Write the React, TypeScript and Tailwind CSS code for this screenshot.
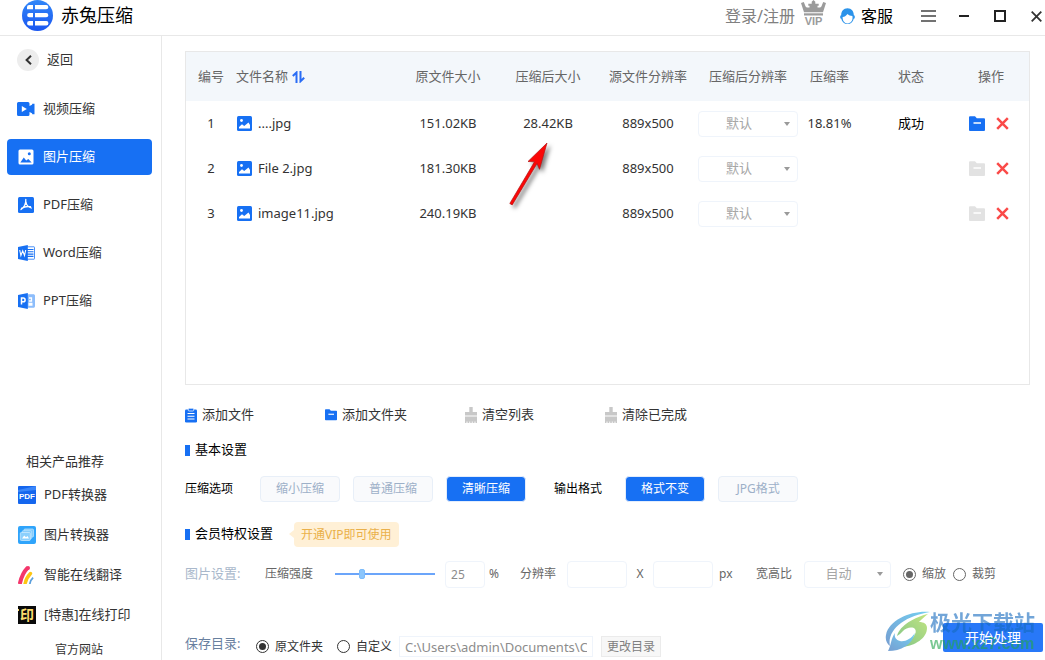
import type { ReactNode } from 'react';

const BLUE = '#1770f3';

function LogoIcon() {
  return (
    <svg width="31" height="31" viewBox="0 0 31 31" className="shrink-0" aria-hidden="true">
      <defs>
        <linearGradient id="logo" x1="0" y1="0" x2="0" y2="1">
          <stop offset="0" stopColor="#3187f8" />
          <stop offset="1" stopColor="#1a56f0" />
        </linearGradient>
      </defs>
      <circle cx="15.5" cy="15.5" r="15.5" fill="url(#logo)" />
      <g fill="#fff">
        <path d="M7.3 5H11v4.3H5V7.3A2.3 2.3 0 0 1 7.3 5zM13 5h11.200a2.150 2.150 0 0 1 0 4.300H13z" />
        <path d="M7.300 13H11v4.300H7.300a2.150 2.150 0 0 1 0-4.300zM13 13h11.200a2.150 2.150 0 0 1 0 4.300H13z" />
        <path d="M7.300 21H11v4.500H7.300a2.200 2.200 0 0 1 0-4.500zM13 21h11.200a2.200 2.200 0 0 1 0 4.500H13z" />
      </g>
    </svg>
  );
}

function VipIcon() {
  return (
    <svg width="25" height="26" viewBox="0 0 25 26" fill="#9b9b9b" aria-hidden="true">
      <path d="M0 3l2.800-1 1.400 3.600C4.700 7 5.300 7.600 6.800 7.600h1.700V5.800H7.300V3.700h3.400V1.800L12.500 0l1.800 1.800v1.900h3.400v2.100h-1.200v1.800h1.700c1.500 0 2.100-.6 2.600-2L22.200 2 25 3l-3 9.200H3z" />
      <path d="M3 13.300h19v2.200H3z" />
      <text x="12.500" y="25" textAnchor="middle" fontSize="11" fontWeight="700" fontFamily="Liberation Sans, sans-serif">VIP</text>
    </svg>
  );
}

function ServiceIcon() {
  return (
    <svg width="15" height="17" viewBox="0 0 15 17" aria-hidden="true">
      <circle cx="2" cy="9" r="2" fill="#3f9df0" />
      <circle cx="13" cy="9" r="2" fill="#3f9df0" />
      <path d="M7.500.3c4 0 6.300 3 6.300 7v2.500a6.300 6.300 0 0 1-12.600 0V7.300c0-4 2.300-7 6.300-7z" fill="#2b93ea" />
      <path d="M2.600 9C4.800 8.600 6.500 7.400 7.400 5.900c1.300 1.200 3 1.900 5 2.100.8 4.200-1.500 7.400-4.900 7.400-3.100 0-5-2.700-4.900-6.400z" fill="#fff" />
    </svg>
  );
}

function PictureIcon() {
  return (
    <svg width="15" height="15" viewBox="0 0 15 15" className="shrink-0" aria-hidden="true">
      <rect width="15" height="15" rx="1.500" fill={BLUE} />
      <circle cx="4.500" cy="4.500" r="1.400" fill="#fff" />
      <path d="M2 12.500V11l3-2.700 2.200 1.600L11.500 6.500 13 9v3.500z" fill="#fff" />
    </svg>
  );
}

function VideoIcon() {
  return (
    <svg width="18" height="14" viewBox="0 0 18 14" aria-hidden="true">
      <path d="M1.500 0H11a1.500 1.500 0 0 1 1.500 1.500V4l2.500-1.300.3-.9H17.500v10.400H15.300l-.3-.9L12.500 10v2.500A1.500 1.500 0 0 1 11 14H1.500A1.500 1.500 0 0 1 0 12.500v-11A1.500 1.500 0 0 1 1.500 0z" fill={BLUE} />
      <path d="M4.800 4l5 3-5 3z" fill="#fff" />
    </svg>
  );
}

function PhotoIcon() {
  return (
    <svg width="16" height="16" viewBox="0 0 16 16" aria-hidden="true">
      <rect x=".5" y=".5" width="15" height="15" rx="1.500" fill="#fff" />
      <circle cx="11.300" cy="4.800" r="1.500" fill={BLUE} />
      <path d="M2.300 13.500L5.800 8.500l2.400 3L10.300 10l3.400 3.500z" fill={BLUE} />
    </svg>
  );
}

function PdfIcon() {
  return (
    <svg width="16" height="16" viewBox="0 0 16 16" aria-hidden="true">
      <rect width="16" height="16" rx="1.500" fill={BLUE} />
      <path d="M7.800 2.500C8 6 7.200 9.500 3 12.600M8 5c.3 3 2 5 5.300 6M3.500 11.400c2.500-1.600 5.500-2.300 9-1.700" fill="none" stroke="#fff" strokeWidth="1.300" strokeLinecap="round" />
    </svg>
  );
}

function OfficeIcon({ letter }: { letter: 'W' | 'P' }) {
  return (
    <svg width="17" height="16" viewBox="0 0 17 16" aria-hidden="true">
      <rect x="8" y="1.800" width="8.500" height="12.400" rx=".5" fill={letter === 'W' ? '#fff' : '#8dbdfb'} stroke={letter === 'W' ? '#4b90f7' : '#8dbdfb'} />
      {letter === 'W' ? (
        <path d="M9 4.500h6.500M9 6.800h6.500M9 9.100h6.500M9 11.400h6.500" stroke={BLUE} strokeWidth="1.100" />
      ) : (
        <path d="M11 5h2.500v3H11M10.500 10.500h4M10.500 12h4" stroke="#fff" strokeWidth="1.300" fill="none" />
      )}
      <path d="M0 2L9.800 0v16L0 14z" fill={BLUE} />
      {letter === 'W' ? (
        <path d="M1.700 5l1.200 5.500L4.700 5.800l1.800 4.700L7.700 5" fill="none" stroke="#fff" strokeWidth="1.100" />
      ) : (
        <path d="M3.500 11.500V5h1.700a1.900 1.900 0 0 1 0 3.800H3.500" fill="none" stroke="#fff" strokeWidth="1.500" />
      )}
    </svg>
  );
}

function PdfConvertIcon() {
  return (
    <svg width="18" height="18" viewBox="0 0 18 18" aria-hidden="true">
      <rect width="18" height="18" rx="1" fill="#1566ee" />
      <path d="M0 4L18 0v4L0 6z" fill="#3a86fa" />
      <text x="9" y="12.500" textAnchor="middle" fontSize="8" fontWeight="700" fill="#fff" fontFamily="Liberation Sans, sans-serif">PDF</text>
    </svg>
  );
}

function ImageConvertIcon() {
  return (
    <svg width="18" height="18" viewBox="0 0 18 18" aria-hidden="true">
      <rect width="18" height="18" rx="2" fill="#2fa4fb" />
      <rect x="6" y="3" width="9.500" height="8" rx="1" fill="#7fcafc" stroke="#c3e6fe" strokeWidth=".7" />
      <rect x="4.200" y="4.700" width="9.500" height="8" rx="1" fill="#7fcafc" stroke="#c3e6fe" strokeWidth=".7" />
      <rect x="2.300" y="6.500" width="10" height="8" rx="1" fill="#8bd0fd" stroke="#d5eefe" strokeWidth=".7" />
      <path d="M4 12.500l2.200-3 1.800 1.700 1.500-1.200 1.500 2.500z" fill="#fff" />
    </svg>
  );
}

function TranslateIcon() {
  return (
    <svg width="18" height="18" viewBox="0 0 18 18" fill="none" aria-hidden="true">
      <path d="M1.800 18C3 12 5.500 6 9.800 1.700" stroke="#f4366b" strokeWidth="4" />
      <circle cx="10" cy="2" r="2" fill="#f4366b" />
      <path d="M7 18c.7-4 2.500-7.500 5.500-10.500" stroke="#fdc613" strokeWidth="3.400" strokeLinecap="round" />
      <path d="M11.800 18c.4-2.500 1.400-4.600 3.300-6.300" stroke="#5b9fdc" strokeWidth="1.800" />
    </svg>
  );
}

function PrintIcon() {
  return (
    <svg width="18" height="18" viewBox="0 0 18 18" className="overflow-visible" aria-hidden="true">
      <rect width="18" height="18" fill="#0a0a0a" />
      <path d="M0 3h1v2H0z" fill="#ffd966" />
      <text x="9" y="14" textAnchor="middle" fontSize="14" fontWeight="700" fill="#fcdc6c" fontFamily="Noto Sans CJK SC, sans-serif">印</text>
    </svg>
  );
}

function FolderIcon({ color, width = 16 }: { color: string; width?: number }) {
  return (
    <svg width={width} height={width} viewBox="0 0 16 16" className="shrink-0" aria-hidden="true">
      <path d="M1 .3h5l1.800 2H15a1 1 0 0 1 1 1v10.700a1 1 0 0 1-1 1H1a1 1 0 0 1-1-1V1.300a1 1 0 0 1 1-1z" fill={color} />
      <path d="M4.500 7h7.500" stroke="#fff" strokeWidth="1.500" />
    </svg>
  );
}

function ClipboardIcon() {
  return (
    <svg width="12" height="15" viewBox="0 0 12 15" className="shrink-0" aria-hidden="true">
      <rect y="1.500" width="12" height="13" rx="1.300" fill={BLUE} />
      <rect x="3.300" y=".3" width="5.400" height="2.700" rx=".8" fill={BLUE} stroke="#fff" strokeWidth=".7" />
      <path d="M2.500 5.500h7M2.500 8.200h7M2.500 11h7" stroke="#fff" strokeWidth="1.100" />
    </svg>
  );
}

function BroomIcon() {
  return (
    <svg width="12" height="16" viewBox="0 0 12 16" fill="#c8c8c8" className="shrink-0" aria-hidden="true">
      <path d="M4.300 0h3.400v5H12v3.500H0V5h4.300zM0 9.500h12V16h-1.500v-1.500H9.500V16H7.700v-1.500H6.800V16H5.200v-1.500H4.300V16H2.500v-1.500H1.500V16H0z" />
    </svg>
  );
}

function CloseMark() {
  return (
    <svg width="13" height="13" viewBox="0 0 13 13" aria-hidden="true">
      <path d="M1.200 1.200l10.600 10.600M11.800 1.200L1.200 11.800" stroke="#fa4a48" strokeWidth="2.500" />
    </svg>
  );
}

function SortIcon() {
  return (
    <svg width="13" height="12" viewBox="0 0 13 12" fill="none" stroke="#2a6df5" strokeWidth="2" aria-hidden="true">
      <path d="M4.500 12V1.500L.8 5M8.500 0v10.300l3.700-3.500" />
    </svg>
  );
}

function PickBox({ label, value, className }: { label: string; value: string; className: string }) {
  return (
    <div className={`relative ${className}`}>
      <select
        aria-label={label}
        className="h-full w-full appearance-none rounded border border-[#eff4fb] bg-white pr-[18px] text-center text-[13px] text-[#a6a6a6] outline-none [text-align-last:center]"
      >
        <option>{value}</option>
      </select>
      <svg width="6" height="4" viewBox="0 0 6 4" className="pointer-events-none absolute top-1/2 right-2 -translate-y-1/2" aria-hidden="true">
        <path d="M0 0h6L3 4z" fill="#9a9a9a" />
      </svg>
    </div>
  );
}

function Radio({ name, label, checked, tone }: { name: string; label: string; checked?: boolean; tone: string }) {
  return (
    <label className={`flex items-center gap-1.5 text-xs ${tone}`}>
      <input
        type="radio"
        name={name}
        defaultChecked={checked}
        className="grid h-[13px] w-[13px] shrink-0 appearance-none place-items-center rounded-full border border-current before:h-[7px] before:w-[7px] before:rounded-full before:bg-current before:opacity-0 before:content-[''] checked:before:opacity-100"
      />
      {label}
    </label>
  );
}

function Choice({ children, active }: { children: ReactNode; active?: boolean }) {
  const tone = active ? 'border-[#e3edfc] bg-[#1770f3] text-white' : 'border-[#e8eff8] bg-[#f9fafc] text-[#9db0c8]';
  return (
    <button type="button" className={`h-[26px] w-20 rounded border text-xs ${tone}`}>
      {children}
    </button>
  );
}

function SectionTitle({ children }: { children: ReactNode }) {
  return (
    <h2 className="flex items-center gap-[5px] text-[13px] text-black">
      <span className="h-[11px] w-[5px] bg-[#1770f3]" />
      {children}
    </h2>
  );
}

function Watermark() {
  return (
    <div className="pointer-events-none absolute right-2.5 bottom-1.5 z-10 flex items-center opacity-60" aria-hidden="true">
      <svg width="45" height="42" viewBox="0 0 45 42">
        <defs>
          <linearGradient id="swirl" x1="0" y1="1" x2="1" y2="0">
            <stop offset="0" stopColor="#1c5fb4" />
            <stop offset="1" stopColor="#18b0e8" />
          </linearGradient>
          <linearGradient id="leaf" x1="0" y1="1" x2="1" y2="0">
            <stop offset="0" stopColor="#2f9e3c" />
            <stop offset="1" stopColor="#9bd42c" />
          </linearGradient>
        </defs>
        <path d="M45 1C28-1 4 8 1 24c-1 5 1 9 4 11C3 26 8 18 16 12 24 6 34 3 45 1z" fill="url(#swirl)" />
        <path d="M43 3C30 6 15 14 12 25c2-1 4-3 6-5 3-3 9-5 12-2 3 4-3 11-13 18 13-1 25-9 25-19 0-4-3-6-8-6 3-3 6-6 9-8z" fill="url(#leaf)" />
        <path d="M3 40c13 0 24-6 27-18-4 6-10 9-15 8-4-1-6-4-5-8-4 5-4 13-7 18z" fill="url(#swirl)" />
        <path d="M14 27c4-5 9-8 14-8-2 5-7 8-14 8z" fill="#fff" />
      </svg>
      <div className="flex flex-col">
        <span className="text-[21px] leading-6 font-bold text-[#166bbf]">极光下载站</span>
        <span className="font-['Liberation_Sans',sans-serif] text-base leading-5 font-bold text-[#22a54d]">www.xz7.com</span>
      </div>
    </div>
  );
}

const navItems = [
  { label: '视频压缩', icon: <VideoIcon /> },
  { label: '图片压缩', icon: <PhotoIcon />, active: true },
  { label: 'PDF压缩', icon: <PdfIcon /> },
  { label: 'Word压缩', icon: <OfficeIcon letter="W" /> },
  { label: 'PPT压缩', icon: <OfficeIcon letter="P" /> },
];

const products = [
  { label: 'PDF转换器', icon: <PdfConvertIcon /> },
  { label: '图片转换器', icon: <ImageConvertIcon /> },
  { label: '智能在线翻译', icon: <TranslateIcon /> },
  { label: '[特惠]在线打印', icon: <PrintIcon /> },
];

const files = [
  { name: '....jpg', size: '151.02KB', after: '28.42KB', rate: '18.81%', status: '成功' },
  { name: 'File 2.jpg', size: '181.30KB', after: '', rate: '', status: '' },
  { name: 'image11.jpg', size: '240.19KB', after: '', rate: '', status: '' },
];

const tools = [
  { label: '添加文件', icon: <ClipboardIcon /> },
  { label: '添加文件夹', icon: <FolderIcon color={BLUE} width={12} /> },
  { label: '清空列表', icon: <BroomIcon /> },
  { label: '清除已完成', icon: <BroomIcon /> },
];

function TitleBar() {
  return (
    <header className="flex h-9 shrink-0 items-start border-b border-[#e8e8e8] pr-[3px] pl-[22px]">
      <div className="flex items-center gap-2">
        <LogoIcon />
        <h1 className="text-lg leading-[31px] text-black">赤兔压缩</h1>
      </div>
      <div className="ml-auto flex h-8 items-center">
        <a href="#login" className="text-base text-[#808080]">登录/注册</a>
        <a href="#vip" aria-label="VIP" className="ml-1.5 h-8"><VipIcon /></a>
        <a href="#service" className="ml-3.5 flex items-center gap-1.5 text-base text-black">
          <ServiceIcon />
          客服
        </a>
        <button type="button" aria-label="菜单" className="ml-7">
          <svg width="15" height="12" viewBox="0 0 15 12" stroke="#444" strokeWidth="1.700"><path d="M0 1h15M0 6h15M0 11h15" /></svg>
        </button>
        <button type="button" aria-label="最小化" className="ml-[23px]">
          <svg width="10" height="12" viewBox="0 0 10 12" stroke="#222" strokeWidth="2"><path d="M0 6h10" /></svg>
        </button>
        <button type="button" aria-label="最大化" className="ml-[25px]">
          <svg width="12" height="12" viewBox="0 0 12 12" fill="none" stroke="#222" strokeWidth="2"><path d="M1 1h10v10H1z" /></svg>
        </button>
        <button type="button" aria-label="关闭" className="ml-[25px]">
          <svg width="11" height="11" viewBox="0 0 11 11" stroke="#333" strokeWidth="1.800"><path d="M.7.7l9.600 9.600M10.300.7L.7 10.300" /></svg>
        </button>
      </div>
    </header>
  );
}

function Sidebar() {
  return (
    <aside className="flex w-[162px] shrink-0 flex-col border-r border-[#e8e8e8] text-[13px] text-[#333]">
      <button type="button" className="mb-[7px] flex h-12 items-center gap-2 pl-[17px]">
        <span className="grid h-[22px] w-[22px] place-items-center rounded-full bg-[#ededed]">
          <svg width="7" height="10" viewBox="0 0 7 10" fill="none" stroke="#333" strokeWidth="2"><path d="M6 .8L1.600 5 6 9.200" /></svg>
        </span>
        返回
      </button>
      <nav className="flex flex-col gap-3 pr-[9px] pl-[7px]">
        {navItems.map((item) => (
          <a
            key={item.label}
            href="#nav"
            className={`flex h-9 items-center gap-2 rounded pl-2.5 ${item.active ? 'bg-[#1770f3] text-white' : ''}`}
          >
            <span className="grid w-[18px] place-items-center">{item.icon}</span>
            {item.label}
          </a>
        ))}
      </nav>
      <div className="mt-auto flex flex-col">
        <h2 className="pl-[26px] leading-7">相关产品推荐</h2>
        {products.map((item) => (
          <a key={item.label} href="#product" className="flex h-10 items-center gap-2 pl-[18px]">
            {item.icon}
            {item.label}
          </a>
        ))}
        <a href="#site" className="pt-[5px] pl-[55px] text-xs leading-5">官方网站</a>
      </div>
    </aside>
  );
}

function FileTable() {
  return (
    <div className="relative mr-[15px] ml-[23px] flex-1 border border-[#e8e8e8]">
      <table className="w-full table-fixed text-[13px] text-[#333]">
        <colgroup>
          <col className="w-[50px]" />
          <col />
          <col className="w-[100px]" />
          <col className="w-[100px]" />
          <col className="w-[100px]" />
          <col className="w-[100px]" />
          <col className="w-[63px]" />
          <col className="w-[100px]" />
          <col className="w-[68px]" />
        </colgroup>
        <thead>
          <tr className="h-[49px] bg-[#f3f7fb] text-[#666] *:font-normal">
            <th>编号</th>
            <th>
              <span className="flex items-center gap-1">文件名称 <SortIcon /></span>
            </th>
            <th>原文件大小</th>
            <th>压缩后大小</th>
            <th>源文件分辨率</th>
            <th>压缩后分辨率</th>
            <th>压缩率</th>
            <th>状态</th>
            <th className="pr-2">操作</th>
          </tr>
        </thead>
        <tbody>
          {files.map((file, i) => (
            <tr key={file.name} className="h-[45px] text-center">
              <td>{i + 1}</td>
              <td>
                <span className="flex items-center gap-1.5 pl-px">
                  <PictureIcon />
                  {file.name}
                </span>
              </td>
              <td>{file.size}</td>
              <td>{file.after}</td>
              <td>889x500</td>
              <td><PickBox label={`${file.name} 压缩后分辨率`} value="默认" className="h-[26px]" /></td>
              <td>{file.rate}</td>
              <td className="text-black">{file.status}</td>
              <td>
                <span className="flex items-center gap-[11px] pl-2">
                  <button type="button" aria-label="打开文件夹"><FolderIcon color={file.status ? BLUE : '#e2e2e2'} /></button>
                  <button type="button" aria-label="删除"><CloseMark /></button>
                </span>
              </td>
            </tr>
          ))}
        </tbody>
      </table>
      <svg width="46" height="70" viewBox="0 0 46 70" className="pointer-events-none absolute top-[88px] left-80 drop-shadow-[3px_3px_2px_rgba(0,0,0,0.5)]" aria-hidden="true">
        <path d="M41 3L22 21.500l6.500.3L3.800 63.500l2.400 1.400L31 23.500l2.500 5.800z" fill="#fb0707" stroke="#b31212" strokeWidth=".7" />
      </svg>
    </div>
  );
}

function Settings() {
  return (
    <section className="flex shrink-0 flex-col pl-[23px]">
      <div className="mt-2.5 flex h-10 items-center">
        {tools.map((tool) => (
          <button key={tool.label} type="button" className="flex w-[140px] items-center gap-[5px] text-[13px] text-[#333]">
            {tool.icon}
            {tool.label}
          </button>
        ))}
      </div>
      <div className="flex h-[30px] items-center">
        <SectionTitle>基本设置</SectionTitle>
      </div>
      <div className="flex h-12 items-center text-xs text-black">
        <span className="mr-[27px]">压缩选项</span>
        <div className="flex gap-[13px]">
          <Choice>缩小压缩</Choice>
          <Choice>普通压缩</Choice>
          <Choice active>清晰压缩</Choice>
        </div>
        <span className="mr-[23px] ml-7">输出格式</span>
        <div className="flex gap-[13px]">
          <Choice active>格式不变</Choice>
          <Choice>JPG格式</Choice>
        </div>
      </div>
      <div className="flex h-[42px] items-center">
        <SectionTitle>会员特权设置</SectionTitle>
        <a href="#vip" className="ml-4 flex items-center text-xs text-[#eab04a]">
          <svg width="5" height="8" viewBox="0 0 5 8" aria-hidden="true"><path d="M5 0v8L0 4z" fill="#fff0d6" /></svg>
          <span className="rounded-sm bg-[#fff0d6] px-[7px] leading-[25px]">开通VIP即可使用</span>
        </a>
      </div>
      <div className="flex h-[38px] items-center text-xs whitespace-nowrap text-[#666]">
        <span className="w-20 text-[13px] text-[#a9b8cb]">图片设置:</span>
        <label htmlFor="strength" className="mr-[22px]">压缩强度</label>
        <input
          id="strength"
          type="range"
          defaultValue={25}
          className="h-2.5 w-[100px] appearance-none bg-transparent [&::-webkit-slider-runnable-track]:h-0.5 [&::-webkit-slider-runnable-track]:bg-[#6ba5fa] [&::-webkit-slider-thumb]:-mt-1 [&::-webkit-slider-thumb]:h-2.5 [&::-webkit-slider-thumb]:w-1.5 [&::-webkit-slider-thumb]:appearance-none [&::-webkit-slider-thumb]:rounded-xs [&::-webkit-slider-thumb]:border [&::-webkit-slider-thumb]:border-[#7dbcfb] [&::-webkit-slider-thumb]:bg-[#8cc6fc]"
        />
        <input aria-label="压缩强度百分比" defaultValue="25" className="mr-1 ml-2.5 h-[27px] w-10 rounded border border-[#eff4fb] px-[5px] text-[#8c8c8c]" />
        <span className="w-[31px]">%</span>
        <label htmlFor="res-w" className="mr-[11px]">分辨率</label>
        <input id="res-w" className="h-[27px] w-[60px] rounded border border-[#eff4fb] px-1" />
        <span className="w-[26px] text-center">X</span>
        <input aria-label="分辨率高度" className="h-[27px] w-[60px] rounded border border-[#eff4fb] px-1" />
        <span className="w-[43px] pl-1.5">px</span>
        <span className="mr-3">宽高比</span>
        <PickBox label="宽高比" value="自动" className="h-[27px] w-[87px]" />
        <div className="ml-3 flex gap-[7px]">
          <Radio name="fit" label="缩放" checked tone="text-[#666]" />
          <Radio name="fit" label="裁剪" tone="text-[#666]" />
        </div>
      </div>
      <div className="relative flex h-[67px] items-end pr-0.5 whitespace-nowrap">
        <span className="mb-1.5 w-[71px] text-[13px] leading-[21px] text-[#68809f]">保存目录:</span>
        <div className="mb-[3px] flex h-[21px] items-center">
          <div className="flex gap-3.5">
            <Radio name="dir" label="原文件夹" checked tone="text-[#333]" />
            <Radio name="dir" label="自定义" tone="text-[#333]" />
          </div>
          <input
            aria-label="保存路径"
            readOnly
            value="C:\Users\admin\Documents\CTC"
            className="ml-[7px] h-[21px] w-[194px] border border-[#eff4fb] px-[5px] text-[13px] text-[#8c8c8c]"
          />
          <button type="button" className="ml-2 h-[21px] w-[60px] border border-[#ebebeb] bg-[#f7f7f7] text-xs text-[#808080]">更改目录</button>
        </div>
        <button type="button" className="mb-2 ml-auto h-[29px] w-[100px] rounded-xs bg-[#2878f8] text-sm text-white">
          <span className="relative z-20">开始处理</span>
        </button>
        <Watermark />
      </div>
    </section>
  );
}

export default function App() {
  return (
    <div className="flex min-h-screen flex-col bg-white font-['Noto_Sans','Noto_Sans_CJK_SC',sans-serif]">
      <TitleBar />
      <div className="flex flex-1">
        <Sidebar />
        <main className="flex min-w-0 flex-1 flex-col pt-[15px]">
          <FileTable />
          <Settings />
        </main>
      </div>
    </div>
  );
}
